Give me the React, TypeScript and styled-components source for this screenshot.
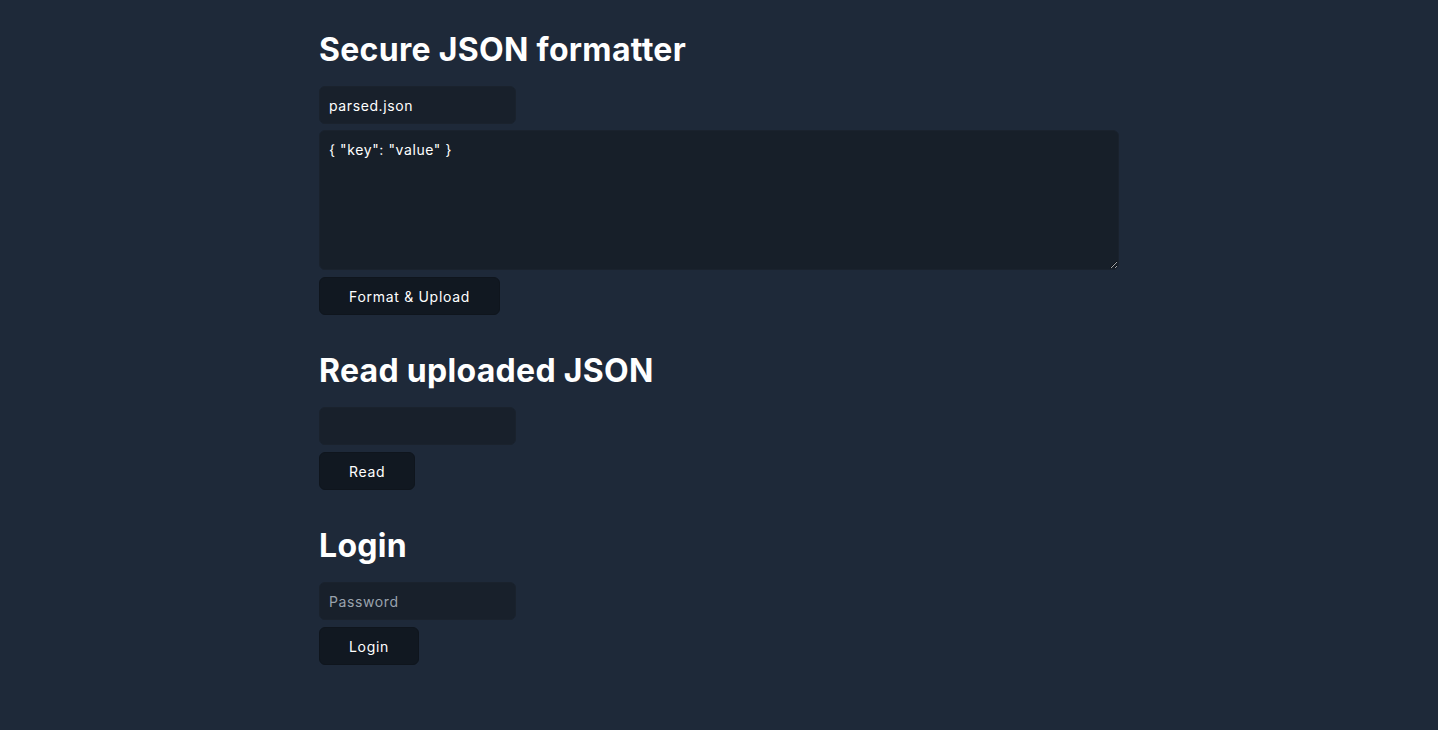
import React from "react";
import styled, { createGlobalStyle } from "styled-components";

const GlobalStyle = createGlobalStyle`
    html, body {
        margin: 0;
        padding: 0;
        background: #1e2939;
        color: #ffffff;
        font-family: Inter, "Noto Sans", sans-serif;
    }
`

const Page = styled.main`
    max-width: 800px;
    margin: 0 auto;
    padding: 31px 0 40px;
    display: flex;
    flex-direction: column;
    gap: 37px;
`

const Section = styled.section`
    display: flex;
    flex-direction: column;
    align-items: flex-start;
`

const Heading = styled.h2`
    margin: 0 0 17px;
    font-size: 32px;
    line-height: 38px;
    font-weight: 700;
    letter-spacing: 0.3px;
`

const Stack = styled.div`
    display: flex;
    flex-direction: column;
    align-items: flex-start;
    gap: 7px;
    width: 100%;
`

const Input = styled.input`
    box-sizing: border-box;
    width: 197px;
    height: 38px;
    padding: 0 9px;
    border: 1px solid #1a222d;
    border-radius: 6px;
    background: #18202b;
    color: #ffffff;
    font-family: Inter, "Noto Sans", sans-serif;
    font-size: 14px;
    letter-spacing: 0.6px;
    outline: none;

    &::placeholder {
        color: #9aa3ae;
    }
`

const TextArea = styled.textarea`
    box-sizing: border-box;
    display: block;
    width: 100%;
    height: 140px;
    margin-top: -1px;
    padding: 10px 9px;
    border: 1px solid #1a222d;
    border-radius: 6px;
    background: #171f29;
    color: #ffffff;
    font-family: Inter, "Noto Sans", sans-serif;
    font-size: 14px;
    letter-spacing: 0.6px;
    resize: vertical;
    outline: none;
`

const Button = styled.button`
    box-sizing: border-box;
    height: 38px;
    padding: 0 29px;
    border: 1px solid #0f151d;
    border-radius: 6px;
    background: #111821;
    color: #ffffff;
    font-family: Inter, "Noto Sans", sans-serif;
    font-size: 14px;
    letter-spacing: 0.7px;
    cursor: pointer;
`

const App = () => {
    return <>
        <GlobalStyle />
        <Page>
            <Section>
                <Heading>Secure JSON formatter</Heading>
                <Stack>
                    <Input defaultValue="parsed.json" />
                    <TextArea defaultValue={'{ "key": "value" }'} />
                    <Button>Format &amp; Upload</Button>
                </Stack>
            </Section>
            <Section>
                <Heading>Read uploaded JSON</Heading>
                <Stack>
                    <Input />
                    <Button>Read</Button>
                </Stack>
            </Section>
            <Section>
                <Heading>Login</Heading>
                <Stack>
                    <Input type="password" placeholder="Password" />
                    <Button>Login</Button>
                </Stack>
            </Section>
        </Page>
    </>
}

export default App;
